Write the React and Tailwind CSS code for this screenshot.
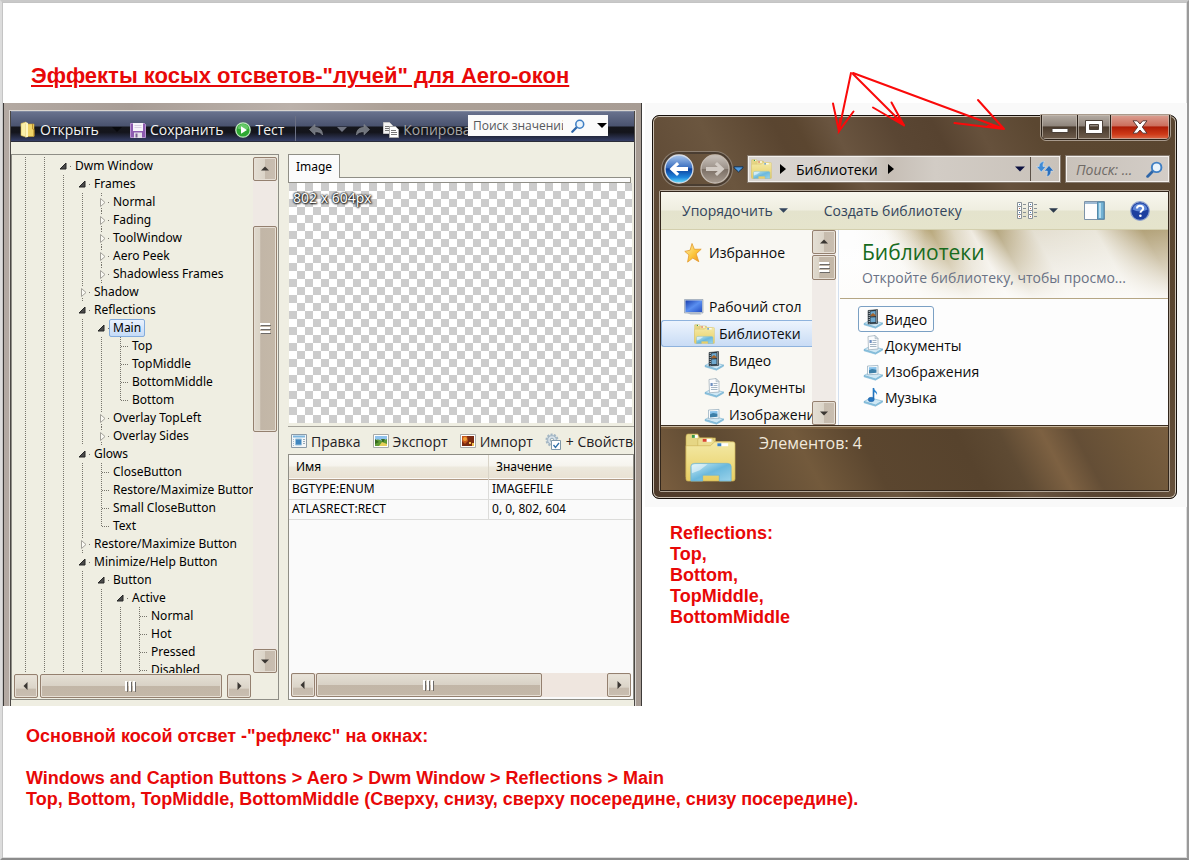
import React from "react";

const TAHOMA = "font-['Noto_Sans','DejaVu_Sans_Condensed',sans-serif]";
const SEGOE = "font-['Open_Sans','Noto_Sans',sans-serif]";

/* ---------- scroll bars ---------- */

const ARROWS = {
  up: "M8 13.500 12 9.500l4 4z",
  down: "M8 10.500h8l-4 4z",
  left: "M13.500 8v8l-4-4z",
  right: "M10.500 8v8l4-4z",
};

function ScrollButton({ dir, label }) {
  const shade =
    dir === "up" || dir === "down"
      ? "bg-[linear-gradient(90deg,#e4dfd4_0%,#dbd4c8_48%,#c6bbad_52%,#c9beb1_100%)]"
      : "bg-[linear-gradient(180deg,#e9e4da_0%,#dbd4c8_60%,#c6bbad_64%,#c9beb1_100%)]";
  return (
    <button
      type="button"
      aria-label={label}
      className={`size-6 shrink-0 rounded-xs border border-[#94806f] shadow-[inset_0_0_0_1px_#e6dfd5] ${shade}`}
    >
      <svg viewBox="1 1 22 22" className="size-full" aria-hidden="true">
        <path d={ARROWS[dir]} fill="#3a3632" />
      </svg>
    </button>
  );
}

function GripV() {
  return (
    <svg viewBox="0 0 11 12" className="h-3 w-[11px]" aria-hidden="true">
      <path d="M0 1h10M0 5h10M0 9h10" stroke="#fff" strokeWidth="2" />
      <path d="M1 2.500h10M1 6.500h10M1 10.500h10" stroke="#6d6a68" />
    </svg>
  );
}

function GripH() {
  return (
    <svg viewBox="0 0 12 11" className="h-[11px] w-3" aria-hidden="true">
      <path d="M1 0v10M5 0v10M9 0v10" stroke="#fff" strokeWidth="2" />
      <path d="M2.500 1v10M6.500 1v10M10.500 1v10" stroke="#6d6a68" />
    </svg>
  );
}

const THUMB = "flex items-center justify-center rounded-xs border border-[#94806f] shadow-[inset_0_0_0_1px_#e6dfd5]";
const THUMB_V = "bg-[linear-gradient(90deg,#dfd9cd_0%,#dad3c6_28%,#c2b6a7_30%,#c4b8a8_100%)]";
const THUMB_H = "bg-[linear-gradient(180deg,#e4dfd4_0%,#d9d2c6_48%,#c2b6a7_50%,#c4b8a8_100%)]";

/* ---------- tree ---------- */

const TREE = [
  [2, "open", "Dwm Window"],
  [3, "open", "Frames"],
  [4, "closed", "Normal"],
  [4, "closed", "Fading"],
  [4, "closed", "ToolWindow"],
  [4, "closed", "Aero Peek"],
  [4, "closed", "Shadowless Frames"],
  [3, "closed", "Shadow"],
  [3, "open", "Reflections"],
  [4, "open", "Main", true],
  [5, "leaf", "Top"],
  [5, "leaf", "TopMiddle"],
  [5, "leaf", "BottomMiddle"],
  [5, "last", "Bottom"],
  [4, "closed", "Overlay TopLeft"],
  [4, "closed", "Overlay Sides"],
  [3, "open", "Glows"],
  [4, "leaf", "CloseButton"],
  [4, "leaf", "Restore/Maximize Button"],
  [4, "leaf", "Small CloseButton"],
  [4, "last", "Text"],
  [3, "closed", "Restore/Maximize Button"],
  [3, "open", "Minimize/Help Button"],
  [4, "open", "Button"],
  [5, "open", "Active"],
  [6, "leaf", "Normal"],
  [6, "leaf", "Hot"],
  [6, "leaf", "Pressed"],
  [6, "leaf", "Disabled"],
];

function Guide() {
  return (
    <svg viewBox="0 0 19 18" className="h-[18px] w-[19px] shrink-0" aria-hidden="true">
      <path d="M9.500 0v18" stroke="#77756c" strokeDasharray="1 1" />
    </svg>
  );
}

function Node({ kind }) {
  return (
    <svg viewBox="0 0 17 18" className="h-[18px] w-[17px] shrink-0" aria-hidden="true">
      {kind === "open" && (
        <>
          <path d="M12 6v6H6z" fill="#4a4a4a" stroke="#262626" strokeLinejoin="round" />
          <path d="M17 9.500h-1" stroke="#77756c" />
        </>
      )}
      {kind === "closed" && (
        <>
          <path d="M9.500 0v4M9.500 15v3" stroke="#77756c" strokeDasharray="1 1" />
          <path d="M8.500 5.500v8l4.500-4z" fill="#fbfaf4" stroke="#a3a19a" strokeLinejoin="round" />
          <path d="M17 9.500h-1" stroke="#77756c" />
        </>
      )}
      {(kind === "leaf" || kind === "last") && (
        <path
          d={kind === "leaf" ? "M9.500 0v18M10 9.500h7" : "M9.500 0v10M10 9.500h7"}
          stroke="#77756c"
          strokeDasharray="1 1"
        />
      )}
    </svg>
  );
}

function Tree() {
  return (
    <ul className="h-[516px] min-w-0 flex-1 overflow-hidden pl-1">
      {TREE.map(([level, kind, label, selected], i) => (
        <li key={i} className="flex h-[18px] items-center whitespace-nowrap">
          {Array.from({ length: level }, (_, g) => (
            <Guide key={g} />
          ))}
          <Node kind={kind} />
          <span
            className={
              selected
                ? "h-[18px] rounded-xs border border-[#84acdd] bg-[linear-gradient(#eaf2fd,#c5dbf7)] px-[3px] leading-4"
                : "px-1 leading-[18px]"
            }
          >
            {label}
          </span>
        </li>
      ))}
    </ul>
  );
}

/* ---------- icons ---------- */

function BookIcon() {
  return (
    <svg viewBox="0 0 16 17" className="h-[17px] w-4" aria-hidden="true">
      <path d="M1 2.500 6 1v15l-5-1.500z" fill="#fbf0a8" stroke="#d9b94e" strokeWidth=".6" />
      <path d="M6 3h8v12.500H6z" fill="#f0d468" stroke="#c69f35" strokeWidth=".6" />
      <path d="M5.500 1 8 2v14l-2.500.5z" fill="#fff6c0" />
      <path d="M12.500 3v5l1.500.5V15" stroke="#b98e2b" fill="none" />
    </svg>
  );
}

function FloppyIcon() {
  return (
    <svg viewBox="0 0 16 16" className="size-4" aria-hidden="true">
      <path d="M.5 1.500h14l1 1v13H.5z" fill="#8d5bb0" stroke="#b894cf" />
      <path d="M3 1h10v8H3z" fill="#f7f4fa" />
      <path d="M4.500 3.500h7M4.500 5.500h7" stroke="#d9d0e2" />
      <path d="M4 10.500h8V16H4z" fill="#e6e1ea" />
      <path d="M5.500 11.500h2v4h-2z" fill="#7c5f94" />
    </svg>
  );
}

function PlayIcon() {
  return (
    <svg viewBox="0 0 16 16" className="size-4" aria-hidden="true">
      <circle cx="8" cy="8" r="7.200" fill="#2da832" stroke="#bfe6bf" strokeWidth="1.300" />
      <path d="M2.500 6.500a5.600 5.600 0 0 1 11 0C10 8 6 8 2.500 6.500z" fill="#7fd67f" opacity=".7" />
      <path d="M6 4.200v7.600L12 8z" fill="#fff" />
    </svg>
  );
}

function UndoIcon({ flip }) {
  return (
    <svg viewBox="0 0 16 14" className={flip ? "h-[14px] w-4 -scale-x-100" : "h-[14px] w-4"} aria-hidden="true">
      <path d="M1.500 6.500 7 1.500v3c5 0 7.500 2.500 7.500 7.500-1.500-2.500-3.500-3.200-7.500-3.200v3z" fill="#70747c" stroke="#8b8f96" strokeWidth=".6" />
    </svg>
  );
}

function CopyIcon() {
  return (
    <svg viewBox="0 0 16 16" className="size-4" aria-hidden="true">
      <path d="M.5.500h6l3 3v8h-9z" fill="#f4f4f4" stroke="#c5c5c5" />
      <path d="M2 4.500h5M2 6.500h4M2 8.500h4" stroke="#777" />
      <path d="M6.500 4.500h6l3 3v8h-9z" fill="#fff" stroke="#a9a9a9" />
      <path d="M8 8.500h5M8 10.500h6M8 12.500h6" stroke="#777" />
    </svg>
  );
}

function Magnifier({ className }) {
  return (
    <svg viewBox="0 0 16 16" className={className} aria-hidden="true">
      <path d="M6.800 9.200 1.500 14.500" stroke="#2f66a8" strokeWidth="2.600" strokeLinecap="round" />
      <circle cx="10" cy="6" r="4.500" fill="#eaf4fc" stroke="#3f7fc4" strokeWidth="1.800" />
    </svg>
  );
}

function Caret({ className }) {
  return (
    <svg viewBox="0 0 10 5" className={className} aria-hidden="true">
      <path d="M0 0h10L5 5z" fill="currentColor" />
    </svg>
  );
}

function EditIcon() {
  return (
    <svg viewBox="0 0 16 14" className="h-[14px] w-4" aria-hidden="true">
      <path d="M.5.500h15v13H.5z" fill="#f3f6f8" stroke="#8b9aa6" />
      <path d="M2 2.500h12" stroke="#7db6de" strokeWidth="2" />
      <path d="M2.500 5v7" stroke="#a6bccb" strokeDasharray="1 1" />
      <path d="M4.500 5h6v6h-6z" fill="#3f86bf" stroke="#9cc3de" />
      <path d="M12 5.500h2M12 7.500h2M12 9.500h2" stroke="#95a9b6" />
    </svg>
  );
}

function ExportIcon() {
  return (
    <svg viewBox="0 0 16 14" className="h-[14px] w-4" aria-hidden="true">
      <path d="M.5.500h15v13H.5z" fill="#fff" stroke="#a8aaa8" />
      <path d="M2 2h12v5H2z" fill="#8fc2ec" />
      <path d="M2 7c3-3 5-1 7 0l5-2v7H2z" fill="#5f9a35" />
      <path d="m2 5 4 3-4 2zM8 5h4l-2 4z" fill="#356b1e" />
      <path d="m6 12 3-4 5 2v2z" fill="#e6cf5a" />
    </svg>
  );
}

function ImportIcon() {
  return (
    <svg viewBox="0 0 16 14" className="h-[14px] w-4" aria-hidden="true">
      <path d="M.5.500h15v13H.5z" fill="#fff" stroke="#a8aaa8" />
      <path d="M2 2h12v10H2z" fill="#7a2a12" />
      <path d="M2 2h5l1 5-3 3-3-3z" fill="#c5561c" />
      <circle cx="5" cy="5" r="2" fill="#f0a23a" />
      <path d="M9 8h2v2H9zM12 9h2v3h-2z" fill="#f2c14e" />
    </svg>
  );
}

function GearIcon() {
  return (
    <svg viewBox="0 0 17 17" className="size-[17px]" aria-hidden="true">
      <circle cx="7" cy="7" r="5.500" fill="#c5d3dd" stroke="#a3b6c3" strokeWidth="2" strokeDasharray="2 1.400" />
      <circle cx="7" cy="7" r="4.300" fill="#dbe5ec" stroke="#a3b6c3" />
      <circle cx="7" cy="7" r="1.800" fill="#f4f3ea" stroke="#93a9b8" />
      <path d="M6.500 7.500h9v9h-9z" fill="#fff" stroke="#7f97a8" />
      <path d="m8.500 12 2 2.500 3.500-4.500" fill="none" stroke="#2f6fa8" strokeWidth="1.300" />
    </svg>
  );
}

function LibraryIcon({ className }) {
  return (
    <svg viewBox="0 0 52 50" className={className} aria-hidden="true">
      <defs>
        <linearGradient id="libY" x1="0" y1="0" x2="0" y2="1">
          <stop offset="0" stopColor="#f3e9a6" />
          <stop offset="1" stopColor="#e8ce62" />
        </linearGradient>
        <linearGradient id="libB" x1="0" y1="0" x2="1" y2="1">
          <stop offset="0" stopColor="#c9ecf5" />
          <stop offset=".5" stopColor="#6bb9dd" />
          <stop offset="1" stopColor="#9bd3ea" />
        </linearGradient>
      </defs>
      <path d="M1 4q0-3 2-3h10l2 4h16v40H1z" fill="#e6d684" stroke="#c3a84b" strokeWidth=".6" />
      <path d="M7 2h6v3H7z" fill="#fff" />
      <path d="M7 2h3v3H7z" fill="#3d9a46" />
      <path d="M13 7q0-2 2-2h13l2 4h16v36H13z" fill="#ecdd90" stroke="#c9b057" strokeWidth=".6" />
      <path d="M18 6h9v3h-9z" fill="#fff" />
      <path d="M18 6h4v3h-4z" fill="#d8462c" />
      <path d="M1 13h25l3-3q1-1 2-1h18q2 0 2 2v36q0 2-2 2H3q-2 0-2-2z" fill="url(#libY)" stroke="#cdb35a" strokeWidth=".7" />
      <path d="M33 10.500h11v3H33z" fill="#fff" />
      <path d="M33 10.500h4v3h-4z" fill="#3c82c4" />
      <path d="M6 34q0-3 4-3h33q4 0 4 3v15H35v-6H18v6H6z" fill="url(#libB)" stroke="#6db4d4" strokeWidth=".8" />
      <path d="M7 33q4-2 16-1l-8 6-8 3z" fill="#fff" opacity=".5" />
    </svg>
  );
}

function Tray() {
  return (
    <>
      <path d="M1 14.500 7.500 11l12 3-7 4z" fill="#cfe8f5" stroke="#8abbd6" strokeWidth=".7" />
      <path d="M1 14.500v1.300l11.500 3.400 7-4V14l-7 4z" fill="#8ec9e6" stroke="#6da9ca" strokeWidth=".5" />
    </>
  );
}

function ShelfIcon({ kind }) {
  return (
    <svg viewBox="0 0 20 20" className="size-5 shrink-0" aria-hidden="true">
      <Tray />
      {kind === "video" && (
        <>
          <path d="m5 1.500 9.500-1v14L5 15z" fill="#2f3c46" stroke="#1d262d" strokeWidth=".5" />
          <path d="M7.500 2.500 12.500 2v5l-5 .3zM7.500 8.600l5-.3V13l-5 .3z" fill="#6ea9cf" />
          <path d="M7.500 6 10 4l2.500 2v1l-5 .3z" fill="#a3642c" />
          <path d="M6.200 2v12.500M13.500 1.500v12.500" stroke="#e8eef2" strokeWidth=".9" strokeDasharray="1 1" />
        </>
      )}
      {kind === "doc" && (
        <>
          <path d="M5 1.500 12 .5l3 3V14l-9.500.8z" fill="#fbfcfd" stroke="#9aa9b5" strokeWidth=".7" />
          <path d="M12 .5v3.200h3z" fill="#d4dee6" stroke="#9aa9b5" strokeWidth=".5" />
          <path d="M9.500 5.500h4M9.500 7.500h4M7 9.500h6.500M7 11.500h6.500" stroke="#8fa3b5" strokeWidth=".8" />
          <path d="M6.500 5h2.200v3H6.500z" fill="#6d8fc0" />
        </>
      )}
      {kind === "picture" && (
        <>
          <path d="m4.500 5 10.500-.6v8.800l-10.500.6z" fill="#f6fafc" stroke="#8fa9ba" strokeWidth=".7" />
          <path d="M6 6.300 13.500 6v2.800L6 9.300z" fill="#86c1ea" />
          <path d="m6 9.300 3-1.300 4.500.8v3L6 12.400z" fill="#3d7fa8" />
        </>
      )}
      {kind === "music" && (
        <>
          <path d="M10.500 1v11" stroke="#2373bd" strokeWidth="1.600" />
          <path d="M10.500.5c.5 3 4.500 3.500 3.500 7.500-.5-2-2-3-3.500-3z" fill="#2d84cf" />
          <ellipse cx="8.200" cy="12.500" rx="3" ry="2.200" fill="#2676c2" stroke="#1d5d9c" strokeWidth=".5" />
        </>
      )}
    </svg>
  );
}

function StarIcon() {
  return (
    <svg viewBox="0 0 20 20" className="size-5 shrink-0" aria-hidden="true">
      <defs>
        <linearGradient id="star" x1="0" y1="0" x2="1" y2="1">
          <stop offset="0" stopColor="#fff3b0" />
          <stop offset=".55" stopColor="#fbc63d" />
          <stop offset="1" stopColor="#f08c1c" />
        </linearGradient>
      </defs>
      <path
        d="m8 .5 2.400 5.800 6.800-.1-5 4.700 2.600 7.800-6-3.600-5.200 4 1.300-7.200L.8 8.400l5.300-1.200z"
        fill="url(#star)"
        stroke="#e39a2b"
        strokeWidth=".8"
        strokeLinejoin="round"
      />
    </svg>
  );
}

function MonitorIcon() {
  return (
    <svg viewBox="0 0 20 20" className="size-5 shrink-0" aria-hidden="true">
      <defs>
        <linearGradient id="scr" x1="0" y1="0" x2="1" y2="1">
          <stop offset="0" stopColor="#1b3fae" />
          <stop offset=".5" stopColor="#5a8ff0" />
          <stop offset="1" stopColor="#2450c4" />
        </linearGradient>
      </defs>
      <path d="M.5 2.500h18.500v13.500H.5z" fill="#c5cfdd" stroke="#8795a8" strokeWidth=".6" />
      <path d="M1.500 3.500h16.500v11.500H1.500z" fill="url(#scr)" />
      <path d="M3 16h13l1.500 1.500h-11z" fill="#aeb9c7" />
    </svg>
  );
}

/* ---------- skin editor window ---------- */

function SkinEditor() {
  const tool = "flex items-center gap-1 whitespace-nowrap";
  return (
    <section
      aria-label="Редактор скинов"
      className="min-w-0 border-x border-[#3d3a38] bg-[#aca198] bg-[linear-gradient(90deg,#b3a9a2,#a89d96_20%,#bbb1aa_45%,#ada197_60%,#a79c94)] px-[5px] pt-[7px]"
    >
      <div className="border-x border-t border-[#d9d4cf]">
        <div className={`border-x border-[#4a4744] bg-[#efeee2] ${TAHOMA} text-[12px] text-black`}>
          <div
            className={`flex h-[31px] items-center overflow-hidden border-y border-t-[#8089a0] border-b-[#2b2d3a] bg-[linear-gradient(#68718d_0%,#4a536f_48%,#15161c_52%,#14151c_70%,#353e66_100%)] pt-[6px] pl-[9px] text-[14px] text-[#f2f2f2] ${SEGOE}`}
          >
            <button type="button" className={`${tool} shrink-0`}>
              <BookIcon />
              Открыть
            </button>
            <Caret className="mr-2 ml-[13px] h-[5px] w-[10px] shrink-0 text-[#08090c]" />
            <button type="button" className={`${tool} shrink-0`}>
              <FloppyIcon />
              Сохранить
            </button>
            <button type="button" className={`${tool} ml-3 shrink-0`}>
              <PlayIcon />
              Тест
            </button>
            <span className="mr-3 ml-[11px] h-7 w-px shrink-0 bg-[#6b7084]" />
            <button type="button" aria-label="Отменить" className="shrink-0">
              <UndoIcon />
            </button>
            <Caret className="mr-2 ml-[13px] h-[5px] w-[10px] shrink-0 text-[#6f7380]" />
            <button type="button" aria-label="Вернуть" className="shrink-0">
              <UndoIcon flip />
            </button>
            <button type="button" className={`${tool} ml-3 min-w-0 flex-1 overflow-hidden text-[#a6a6a6]`}>
              <span className="shrink-0">
                <CopyIcon />
              </span>
              Копировать
            </button>
            <div className="mr-[26px] mb-2 flex h-[21px] w-[140px] shrink-0 items-center bg-[#fbfbfb] pl-[5px] text-black">
              <input
                aria-label="Поиск значений"
                placeholder="Поиск значений"
                className={`w-[90px] bg-transparent text-[12px] placeholder:text-[#55585c] placeholder:opacity-100 focus:outline-none ${SEGOE}`}
              />
              <Magnifier className="mx-2 size-[14px] shrink-0" />
              <Caret className="ml-1 h-[5px] w-[10px] shrink-0" />
            </div>
          </div>

          <div className="grid grid-cols-[268fr_346fr] gap-[9px] pt-3 pb-[6px]">
            <div className="min-w-0 border border-[#8f8e86] pt-[2px]">
              <div className="flex pr-px">
                <Tree />
                <div className="flex w-6 flex-col bg-[#efe9e4]">
                  <ScrollButton dir="up" label="Вверх" />
                  <div className={`mt-[45px] h-[206px] ${THUMB} ${THUMB_V}`}>
                    <GripV />
                  </div>
                  <div className="flex-1" />
                  <ScrollButton dir="down" label="Вниз" />
                </div>
              </div>
              <div className="mt-px mr-[27px] mb-px ml-[2px] flex">
                <ScrollButton dir="left" label="Влево" />
                <div className={`mr-[5px] ml-[2px] flex-1 ${THUMB} ${THUMB_H}`}>
                  <GripH />
                </div>
                <ScrollButton dir="right" label="Вправо" />
              </div>
            </div>

            <div className="flex min-w-0 flex-col">
              <div className="relative z-10 -mb-px flex">
                <button
                  type="button"
                  className="h-6 w-[52px] border border-b-0 border-[#8f8e86] bg-[#fbfbfb] text-center"
                >
                  Image
                </button>
              </div>
              <div className="mr-[3px] h-[6px] border border-[#8f8e86] bg-[#fbfbfb]" />
              <div className="mr-[2px] ml-px h-[240px] bg-[repeating-conic-gradient(#ffffff_0_25%,#cccccc_0_50%)] bg-[length:16px_16px] px-1 pt-[6px] text-[14px] leading-[18px] text-white text-shadow-[0_0_2px_#000,0_0_2px_#000,1px_1px_2px_#222]">
                802 x 604px
              </div>
              <div className="mt-[3px] mb-px h-px bg-[#a3a198]" />
              <div className={`flex h-[26px] items-center gap-3 overflow-hidden pl-[3px] text-[14px] text-[#1f2024] ${SEGOE}`}>
                <button type="button" className={tool}>
                  <EditIcon />
                  Правка
                </button>
                <button type="button" className={tool}>
                  <ExportIcon />
                  Экспорт
                </button>
                <button type="button" className={tool}>
                  <ImportIcon />
                  Импорт
                </button>
                <button type="button" className={tool}>
                  <GearIcon />+ Свойство
                </button>
              </div>
              <div className="flex flex-1 flex-col border border-[#8f8e86] bg-[#fafafa]">
                <table className="w-full table-fixed border-collapse">
                  <thead>
                    <tr className="h-6 border-b border-[#b09a86] bg-[linear-gradient(#fbfaf7_0%,#f6f4ee_45%,#ece8dc_55%,#e9e2d4_100%)] text-left">
                      <th className="w-[58%] border-r border-[#d9d4c8] border-b-[#b09a86] p-0 pl-[7px] font-normal">Имя</th>
                      <th className="p-0 pl-[7px] font-normal">Значение</th>
                    </tr>
                  </thead>
                  <tbody>
                    <tr className="h-5 border-b border-[#dcdcda]">
                      <td className="border-r border-[#dcdcda] p-0 pl-[3px]">BGTYPE:ENUM</td>
                      <td className="p-0 pl-[3px]">IMAGEFILE</td>
                    </tr>
                    <tr className="h-5 border-b border-[#dcdcda]">
                      <td className="border-r border-[#dcdcda] p-0 pl-[3px]">ATLASRECT:RECT</td>
                      <td className="p-0 pl-[3px]">0, 0, 802, 604</td>
                    </tr>
                  </tbody>
                </table>
                <div className="mx-[2px] mt-auto mb-[2px] flex bg-[#efe6df]">
                  <ScrollButton dir="left" label="Влево" />
                  <div className={`mr-[65px] ml-px flex-1 ${THUMB} ${THUMB_H}`}>
                    <GripH />
                  </div>
                  <ScrollButton dir="right" label="Вправо" />
                </div>
              </div>
            </div>
          </div>
        </div>
      </div>
    </section>
  );
}

/* ---------- library window ---------- */

const PLACES = [
  ["video", "Видео"],
  ["doc", "Документы"],
  ["picture", "Изображения"],
];

const ITEMS = [
  ["video", "Видео", true],
  ["doc", "Документы"],
  ["picture", "Изображения"],
  ["music", "Музыка"],
];

function CaptionButtons() {
  const metal = "bg-[linear-gradient(#b5aca4_0%,#8f857c_45%,#4a3b2e_50%,#6e5c4c_100%)]";
  const cell = "flex items-center justify-center shadow-[inset_0_0_0_1px_#c8beb4aa]";
  return (
    <div className="-mt-px flex h-[25px] w-[129px] gap-px overflow-hidden rounded-b-[5px] border border-t-0 border-[#2b2119] bg-[#2b2119] outline outline-[#a89a8c]">
      <button type="button" aria-label="Свернуть" className={`${cell} ${metal} w-[35px]`}>
        <svg viewBox="0 0 18 14" className="h-[14px] w-[18px]" aria-hidden="true">
          <path d="M1 8.500h16v4H1z" fill="#fff" stroke="#4b4038" />
        </svg>
      </button>
      <button type="button" aria-label="Развернуть" className={`${cell} ${metal} w-8`}>
        <svg viewBox="0 0 18 14" className="h-[14px] w-[18px]" aria-hidden="true">
          <path d="M.5.500h17v13H.5zM4.500 4.500v5h9v-5z" fill="#fff" stroke="#4b4038" fillRule="evenodd" />
        </svg>
      </button>
      <button
        type="button"
        aria-label="Закрыть"
        className={`${cell} flex-1 bg-[linear-gradient(#dca093_0%,#cc6f5d_45%,#ae1c06_50%,#cf3a18_80%,#dc6a48_100%)]`}
      >
        <svg viewBox="0 0 16 14" className="h-[14px] w-4" aria-hidden="true">
          <path
            d="M1 .8h4.200L8 4 10.800.8H15L10.300 7l4.700 6.200h-4.200L8 10l-2.800 3.200H1L5.700 7z"
            fill="#fff"
            stroke="#5a3a36"
          />
        </svg>
      </button>
    </div>
  );
}

function NavArrow({ back }) {
  return (
    <svg viewBox="0 0 30 30" className="size-[30px]" aria-hidden="true">
      <defs>
        <linearGradient id="navBlue" x1="0" y1="0" x2="0" y2="1">
          <stop offset="0" stopColor="#a9c6ec" />
          <stop offset=".45" stopColor="#3a6fc0" />
          <stop offset=".5" stopColor="#0b3f9c" />
          <stop offset=".8" stopColor="#1f86dc" />
          <stop offset="1" stopColor="#6de4ff" />
        </linearGradient>
        <linearGradient id="navGray" x1="0" y1="0" x2="0" y2="1">
          <stop offset="0" stopColor="#c9c2bb" />
          <stop offset=".48" stopColor="#9d938a" />
          <stop offset=".52" stopColor="#7c7066" />
          <stop offset="1" stopColor="#a89c91" />
        </linearGradient>
      </defs>
      <circle
        cx="15"
        cy="15"
        r="14"
        fill={back ? "url(#navBlue)" : "url(#navGray)"}
        stroke={back ? "#d4dbe6" : "#c4bbb2"}
        strokeWidth="1.300"
      />
      <path
        d={
          back
            ? "M5.500 15 13 8l2.200 2.200-3 2.900H24v3.800H12.200l3 2.900L13 22z"
            : "M24.500 15 17 8l-2.200 2.200 3 2.900H6v3.800h11.800l-3 2.900L17 22z"
        }
        fill={back ? "#fff" : "#d3ccc5"}
      />
    </svg>
  );
}

function LibraryWindow() {
  return (
    <section
      aria-label="Библиотеки"
      className={`rounded-[7px] border border-[#17110c] bg-[#5e4a33] bg-[linear-gradient(62deg,#4e3a2a_0%,#5c4733_20%,#6b563f_34%,#5a4530_44%,#5b4630_47%,#6a5540_52%,#5a4633_60%,#574330_66%,#66513c_72%,#5b4731_80%,#5a4630_100%)] text-[14px] shadow-[inset_0_0_0_1px_#cdc3b6] ${SEGOE}`}
    >
      <div className="px-[6px] pb-[6px]">
        <div className="flex h-6 justify-end">
          <CaptionButtons />
        </div>

        <div className="mt-3 flex h-[34px] items-center">
          <div className="ml-[5px] flex gap-[6px] rounded-full shadow-[0_0_0_2px_#4a3d31,0_0_0_3px_#8d7f71]">
            <button type="button" aria-label="Назад">
              <NavArrow back />
            </button>
            <button type="button" aria-label="Вперёд">
              <NavArrow />
            </button>
          </div>
          <button type="button" aria-label="Последние страницы" className="mr-1 ml-[3px]">
            <svg viewBox="0 0 11 7" className="h-[7px] w-[11px]" aria-hidden="true">
              <path d="M1 .8h9v1L5.500 6 1 1.800z" fill="#4f9be0" stroke="#17304c" />
            </svg>
          </button>
          <div className="flex h-[26px] min-w-0 flex-1 items-center border border-[#f4f0ec] bg-[linear-gradient(90deg,#d9d5d1,#d6d1cc_35%,#c6beb5_45%,#d2ccc5_60%,#c9c2ba)] outline outline-[#85796d]">
            <LibraryIcon className="mr-2 ml-[2px] h-5 w-[21px]" />
            <svg viewBox="0 0 6 10" className="h-[10px] w-[6px]" aria-hidden="true">
              <path d="M0 0v10l6-5z" />
            </svg>
            <span className="mx-[10px] text-black">Библиотеки</span>
            <svg viewBox="0 0 6 10" className="h-[10px] w-[6px]" aria-hidden="true">
              <path d="M0 0v10l6-5z" />
            </svg>
            <span className="flex-1" />
            <button type="button" aria-label="Предыдущие адреса" className="mr-[5px]">
              <Caret className="h-[6px] w-[10px] text-[#0c1140]" />
            </button>
            <button
              type="button"
              aria-label="Обновить"
              className="flex h-full w-[29px] items-center justify-center border-l border-[#5b5047]"
            >
              <svg viewBox="0 0 18 16" className="h-4 w-[18px]" aria-hidden="true">
                <path d="M8.500.500C5 .5 3 2.500 3.200 5.500H.5l4.800 5.500L10 5.500H7C6.800 3.500 7.200 2 8.500.500z" fill="#3f8bd6" stroke="#dce9f4" strokeWidth=".5" />
                <path d="M10.500 15.500c3.200-.3 4.700-2.500 4.400-5.500h2.800L13 4.500 8.300 10h3c.2 2.200 0 4-.8 5.500z" fill="#2a6fbd" stroke="#dce9f4" strokeWidth=".5" />
              </svg>
            </button>
          </div>
          <label className="mr-px ml-[6px] flex h-[26px] w-[103px] items-center border border-[#f4f0ec] bg-[linear-gradient(90deg,#c9c2ba,#d3cdc7)] pr-[5px] pl-[9px] outline outline-[#85796d]">
            <input
              aria-label="Поиск"
              placeholder="Поиск: ..."
              className="min-w-0 flex-1 bg-transparent italic placeholder:text-[#6f6a66] placeholder:opacity-100 focus:outline-none"
            />
            <Magnifier className="size-[17px]" />
          </label>
        </div>

        <div className="mt-1 rounded-xs border border-[#b3a799]">
          <div className="border border-[#32261b]">
            <div className="flex h-[38px] items-center border-b border-[#d3cfae] bg-[linear-gradient(#f8f7ee_0%,#efeee0_48%,#e4e3cd_52%,#e5e4cc_100%)] pl-[21px] text-[#33455c]">
              <button type="button" className="flex items-center gap-[6px]">
                Упорядочить
                <Caret className="h-[5px] w-[9px]" />
              </button>
              <button type="button" className="ml-9 whitespace-nowrap">
                Создать библиотеку
              </button>
              <span className="flex-1" />
              <button type="button" aria-label="Вид" className="flex items-center gap-3">
                <svg viewBox="0 0 20 18" className="h-[18px] w-5" aria-hidden="true">
                  {[0, 11].map((x) =>
                    [0, 4, 8, 12].map((y) => (
                      <g key={`${x}-${y}`}>
                        <path d={`M${x + 0.5} ${y + 0.5}h4v4h-4z`} fill="#fff" stroke="#8a9298" />
                        <path d={`M${x + 2} ${y + 2}h1v1h-1z`} fill={y % 8 ? "#b3664d" : "#4d7fb3"} />
                        <path d={`M${x + 6} ${y + 2.5}h3`} stroke="#8a9298" />
                      </g>
                    ))
                  )}
                </svg>
                <Caret className="h-[5px] w-[9px] text-[#2c3a4c]" />
              </button>
              <button type="button" aria-label="Область просмотра" className="ml-[26px]">
                <svg viewBox="0 0 21 19" className="h-[19px] w-[21px]" aria-hidden="true">
                  <path d="M.5.500h20v18H.5z" fill="#fdfdfd" stroke="#7d93a8" />
                  <path d="M1 2h19" stroke="#9db9d3" strokeWidth="2" />
                  <path d="M13.500 1v17h6.500V1z" fill="#73b2d4" stroke="#5489a8" />
                  <path d="M15 2h2v15h-2z" fill="#b5dcee" />
                </svg>
              </button>
              <button type="button" aria-label="Справка" className="mr-[18px] ml-[25px]">
                <svg viewBox="0 0 20 20" className="size-5" aria-hidden="true">
                  <circle cx="10" cy="10" r="9.300" fill="#1d3f9f" stroke="#8fa3cf" strokeWidth="1.200" />
                  <path d="M2.500 8.500a7.700 7.700 0 0 1 15 0C13 11 7 11 2.500 8.500z" fill="#5f86d6" />
                  <path d="M7 7.500C7 5.500 8.300 4.800 10 4.800s3.200.9 3.200 2.700c0 2-2.700 2.200-2.700 4.300" fill="none" stroke="#fff" strokeWidth="2" />
                  <circle cx="10.400" cy="14.800" r="1.300" fill="#fff" />
                </svg>
              </button>
            </div>

            <div className="flex h-[195px] bg-[#fcfcfc] text-[#0c0c0c]">
              <nav className="w-[151px] shrink-0 overflow-hidden bg-[#f9f8f3] pt-[9px] leading-[27px] whitespace-nowrap">
                <div className="mb-[27px] flex h-[27px] items-center gap-[5px] pl-[23px]">
                  <StarIcon />
                  Избранное
                </div>
                <div className="flex h-[27px] items-center gap-[5px] pl-[23px]">
                  <MonitorIcon />
                  Рабочий стол
                </div>
                <div className="flex h-[27px] items-center gap-1 rounded-l-[3px] border border-r-0 border-[#8fb3dd] bg-[linear-gradient(#edf4fd,#c9dcf5)] pl-8">
                  <LibraryIcon className="h-5 w-[21px]" />
                  Библиотеки
                </div>
                {PLACES.map(([kind, name]) => (
                  <div key={name} className="flex h-[27px] items-center gap-[5px] pl-[43px]">
                    <ShelfIcon kind={kind} />
                    {name}
                  </div>
                ))}
              </nav>
              <div className="mr-[2px] flex w-6 shrink-0 flex-col bg-[#f0ebe7]">
                <ScrollButton dir="up" label="Вверх" />
                <div className={`mt-px h-[25px] ${THUMB} ${THUMB_V}`}>
                  <GripV />
                </div>
                <div className="flex-1" />
                <ScrollButton dir="down" label="Вниз" />
              </div>
              <main className="min-w-0 flex-1 border-l border-[#d3dfee] bg-[#fdfdfd] pl-px">
                <header className="h-[69px] border-b border-[#b5a684] bg-[linear-gradient(#ffffff00_0%,#ffffff66_45%,#fdfcfaee_100%),linear-gradient(90deg,#fdfdfd_4%,#fdfdfd00_26%),linear-gradient(61deg,#fdfdfd_0%,#f5f2ea_22%,#b9a87c_35%,#ddd5c0_41%,#efeae0_46%,#b5a67f_53%,#c9bd9f_57%,#e3ded0_63%,#eae6da_80%,#b3a279_93%,#b8a882_100%)] pl-[22px]">
                  <h2 className="pt-[7px] text-[21px] leading-[30px] text-[#176b1d]">Библиотеки</h2>
                  <p className="overflow-hidden leading-[22px] whitespace-nowrap text-[#6a7285]">
                    Откройте библиотеку, чтобы просмо...
                  </p>
                </header>
                <ul className="pt-[7px] pl-[18px]">
                  {ITEMS.map(([kind, name, focused]) => (
                    <li key={name}>
                      <button
                        type="button"
                        className={`flex h-[26px] items-center gap-[2px] rounded-[3px] border pr-[6px] pl-1 ${
                          focused ? "border-[#7ba0c4]" : "border-transparent"
                        }`}
                      >
                        <ShelfIcon kind={kind} />
                        {name}
                      </button>
                    </li>
                  ))}
                </ul>
              </main>
            </div>

            <footer className="flex h-[65px] gap-[23px] border-t border-[#3b2d1f] bg-[linear-gradient(62deg,#7a5e3f_0%,#5d4932_14%,#735a3c_30%,#5b462f_42%,#57432d_60%,#5e4a33_68%,#7d6142_76%,#644e36_82%,#6e5639_90%,#7a5f40_100%)] pl-[24px] text-[16px] text-[#f1e9dc] shadow-[inset_0_1px_0_#c9b89f,inset_0_3px_0_#7a5f3e]">
              <LibraryIcon className="mt-[6px] h-[51px] w-[51px]" />
              <p className="pt-[5px] leading-6">Элементов: 4</p>
            </footer>
          </div>
        </div>
      </div>
    </section>
  );
}

/* ---------- page ---------- */

export default function App() {
  return (
    <div className="min-h-screen border-2 border-t-[#c9c9c9] border-r-[#9a9a9a] border-b-[#8c8c8c] border-l-[#dcdcdc] bg-white pt-[60px] pl-px font-['Liberation_Sans',Arial,sans-serif] font-bold text-[#e80808] shadow-[inset_1px_1px_0_#c4c4c4,inset_-1px_-1px_0_#dedede]">
      <h1 className="mb-[13px] pl-7 text-[22px] leading-7 underline">
        Эффекты косых отсветов-"лучей" для Aero-окон
      </h1>

      <div className="grid grid-cols-[639fr_542fr] gap-[3px] font-normal">
        <SkinEditor />
        <div className="relative min-w-0">
          <div className="bg-[#f9f9f9] pt-3 pr-[10px] pb-2 pl-[7px]">
            <LibraryWindow />
          </div>
          <svg
            viewBox="830 70 180 66"
            className="absolute -top-[33px] left-[185px] h-[66px] w-[180px]"
            aria-hidden="true"
          >
            <g fill="none" stroke="#fa0a0a" strokeWidth="2" strokeLinecap="round">
              <path d="M851 73 839 130M833 103.500l6 28M853.500 111.500 839 131l1-12" />
              <path d="M853 74 904 125M873 107.500l31 18M891.500 102.500 904 125.500l-9-7" />
              <path d="M853 73 1004 129M978 100l26 29M954.500 123l49.500 6-16-3" />
            </g>
          </svg>
          <ul className="pt-4 pl-[25px] text-[18px] leading-[21px] font-bold">
            <li>Reflections:</li>
            <li>Top,</li>
            <li>Bottom,</li>
            <li>TopMiddle,</li>
            <li>BottomMiddle</li>
          </ul>
        </div>
      </div>

      <div className="pt-5 pb-6 pl-[23px] text-[18px] leading-[21px]">
        <p>Основной косой отсвет -"рефлекс" на окнах:</p>
        <p className="pt-[21px]">Windows and Caption Buttons &gt; Aero &gt; Dwm Window &gt; Reflections &gt; Main</p>
        <p>Top, Bottom, TopMiddle, BottomMiddle (Сверху, снизу, сверху посередине, снизу посередине).</p>
      </div>
    </div>
  );
}
